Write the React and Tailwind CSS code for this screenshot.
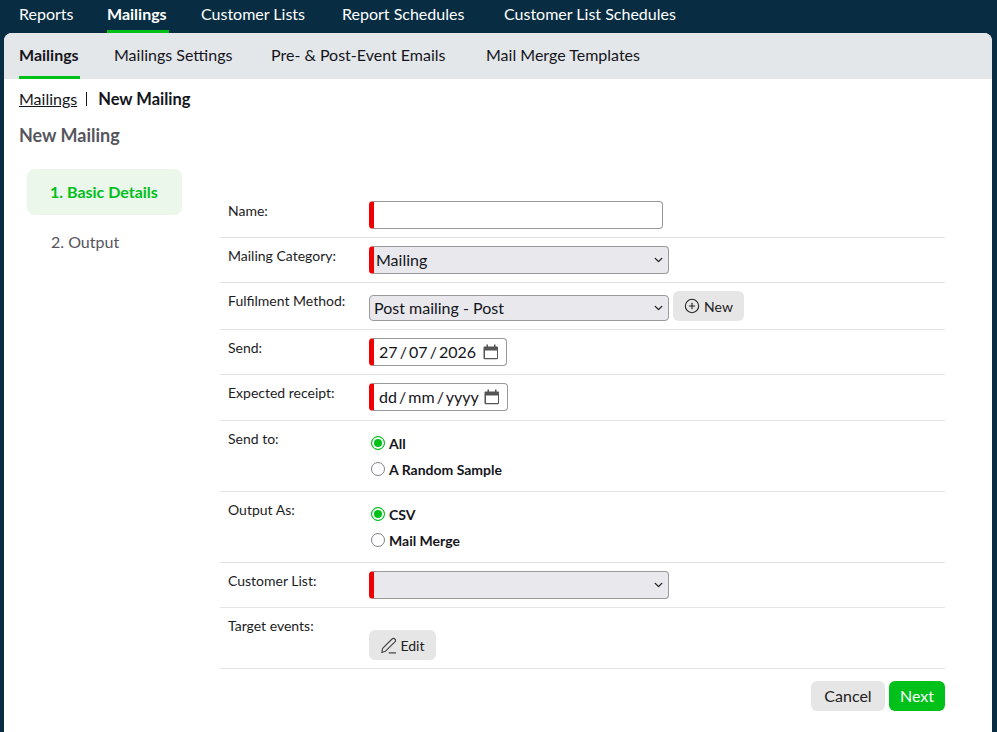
import { ChevronDown, CirclePlus } from "lucide-react";

const topLinks = ["Reports", "Mailings", "Customer Lists", "Report Schedules", "Customer List Schedules"];
const topWidths = ["w-[55px] mr-[33px]", "w-[62px] mr-[32px]", "w-[104px] mr-[37px]", "w-[124px] mr-[38px]", "w-[173px]"];
const subLinks = ["Mailings", "Mailings Settings", "Pre- & Post-Event Emails", "Mail Merge Templates"];
const subWidths = ["w-[61px] mr-[34px]", "w-[117px] mr-[40px]", "w-[175px] mr-[40px]", "w-[153px]"];

function CalendarIcon() {
  return (
    <svg width="16" height="16" viewBox="0 0 16 16" className="ml-auto mr-[7px] shrink-0">
      <path d="M3.5 0.5h1.5v2h6v-2h1.5v2h1.5a1 1 0 0 1 1 1v10.5a1.2 1.2 0 0 1-1.2 1.2H1.7a1.2 1.2 0 0 1-1.2-1.2V3.5a1 1 0 0 1 1-1h2zM2 6.5V14h12V6.5z" fill="#555" />
    </svg>
  );
}

function EditIcon() {
  return (
    <svg width="17" height="17" viewBox="0 0 24 24" fill="none" stroke="#444" strokeWidth="1.6" strokeLinejoin="round" strokeLinecap="round">
      <path d="M2.5 22l1.2-6L17 2.8a2.8 2.8 0 0 1 4 4L7.8 20z" />
      <path d="M13 22.5h9" />
    </svg>
  );
}

function Row({ label, children, className = "" }) {
  return (
    <div className={`flex border-b border-[#e3e3e3] ${className}`}>
      <label className="w-[149px] pl-2 pt-[8px] text-[14px] leading-[20px] text-[#1c1c24]">{label}</label>
      <div>{children}</div>
    </div>
  );
}

function DateBox({ value, width }) {
  return (
    <div className={`flex h-[28px] items-center rounded-[4px] border border-[#999] border-l-[5px] border-l-[#f00000] pl-[5px] text-[16px] text-[#15151c] ${width}`}>
      <span className="whitespace-nowrap [word-spacing:-2px]">{value}</span>
      <CalendarIcon />
    </div>
  );
}

function Select({ value, required, className = "" }) {
  return (
    <div className={`relative w-[300px] ${className}`}>
      <select
        className={`h-full w-full appearance-none rounded-[4px] border border-[#999] bg-[#e8e8ed] text-[16px] text-[#15151c] ${
          required ? "border-l-[5px] border-l-[#f00000] pl-[2px]" : "pl-[4px]"
        }`}
      >
        <option>{value}</option>
      </select>
      <ChevronDown size={13} strokeWidth={2.5} className="pointer-events-none absolute right-[4px] top-1/2 -translate-y-1/2 text-[#222]" />
    </div>
  );
}

function Radio({ label, checked }) {
  return (
    <label className="flex h-[26px] items-center text-[14px] font-bold text-[#15151c]">
      <input
        type="radio"
        defaultChecked={checked}
        name={label}
        className="ml-[2px] mr-[4px] h-[14px] w-[14px] appearance-none rounded-full border border-[#808088] bg-white checked:border-[#00c01a] checked:bg-[#00c01a] checked:shadow-[inset_0_0_0_2px_white]"
      />
      {label}
    </label>
  );
}

export default function App() {
  return (
    <div className="h-[732px] overflow-hidden bg-[#082d42] pr-[5px] pl-[4px] font-['Lato','Inter',sans-serif]">
      {/* Top nav */}
      <nav className="flex h-[33px] pl-[15px] text-[16px] text-white">
        {topLinks.map((link, i) => (
          <a
            key={link}
            className={`block h-[33px] whitespace-nowrap pt-[3px] leading-[22px] ${topWidths[i]} ${
              link === "Mailings" ? "border-b-[3px] border-[#00c01a] font-bold" : ""
            }`}
          >
            {link}
          </a>
        ))}
      </nav>

      <div className="h-[699px] overflow-hidden rounded-t-[8px] bg-white">
        {/* Sub nav */}
        <div className="flex h-[46px] bg-[#e4e7ea] pl-[15px] text-[16px] text-[#15151c]">
          {subLinks.map((link, i) => (
            <a
              key={link}
              className={`block h-[46px] whitespace-nowrap pt-[11px] leading-[22px] ${subWidths[i]} ${
                link === "Mailings" ? "border-b-[3px] border-[#00c01a] font-bold" : ""
              }`}
            >
              {link}
            </a>
          ))}
        </div>

        {/* Breadcrumb */}
        <div className="flex items-center pl-[15px] pt-[9px] text-[16px] leading-[22px] text-[#15151c]">
          <a className="underline">Mailings</a>
          <span className="ml-[9px] mr-[11px] h-[14px] w-px bg-[#15151c]"></span>
          <b className="text-[16.5px]">New Mailing</b>
        </div>
        <h1 className="pl-[15px] pt-[12px] text-[18px] font-bold leading-[26px] text-[#55555e]">New Mailing</h1>

        <div className="flex pt-[21px]">
          {/* Steps */}
          <div className="ml-[23px] w-[155px] shrink-0">
            <div className="h-[46px] rounded-[8px] bg-[#ecf7ec] pl-[23px] text-[16px] font-bold leading-[46px] text-[#00c01a]">1. Basic Details</div>
            <div className="mt-[4px] h-[46px] pl-[24px] text-[16px] leading-[46px] text-[#55555e]">2. Output</div>
          </div>

          {/* Form */}
          <div className="ml-[38px] w-[725px] pt-[24px]">
            <Row label="Name:" className="h-[45px]">
              <input className="mt-[8px] h-[28px] w-[294px] rounded-[4px] border border-[#999] border-l-[5px] border-l-[#f00000] bg-white" />
            </Row>
            <Row label="Mailing Category:" className="h-[45px]">
              <Select value="Mailing" required className="mt-[8px] h-[28px]" />
            </Row>
            <Row label="Fulfilment Method:" className="h-[47px]">
              <div className="flex items-start">
                <Select value="Post mailing - Post" className="mt-[12px] h-[26px]" />
                <button className="ml-[4px] mt-[8px] flex h-[30px] w-[71px] items-center justify-center gap-[4px] rounded-[6px] bg-[#e6e6e6] text-[14px] text-[#222]">
                  <CirclePlus size={16} strokeWidth={1.6} />
                  New
                </button>
              </div>
            </Row>
            <Row label="Send:" className="h-[45px]">
              <div className="pt-[8px]">
                <DateBox value="27 / 07 / 2026" width="w-[138px]" />
              </div>
            </Row>
            <Row label="Expected receipt:" className="h-[46px]">
              <div className="pt-[8px]">
                <DateBox value="dd / mm / yyyy" width="w-[139px]" />
              </div>
            </Row>
            <Row label="Send to:" className="h-[71px]">
              <div className="pt-[9px]">
                <Radio label="All" checked />
                <Radio label="A Random Sample" />
              </div>
            </Row>
            <Row label="Output As:" className="h-[71px]">
              <div className="pt-[9px]">
                <Radio label="CSV" checked />
                <Radio label="Mail Merge" />
              </div>
            </Row>
            <Row label="Customer List:" className="h-[45px]">
              <Select value="" required className="mt-[8px] h-[28px]" />
            </Row>
            <Row label="Target events:" className="h-[61px]">
              <button className="mt-[22px] flex h-[30px] w-[67px] items-center justify-center gap-[3px] rounded-[6px] bg-[#e6e6e6] text-[14px] text-[#222]">
                <EditIcon />
                Edit
              </button>
            </Row>
            <div className="flex justify-end gap-[4px] pt-[12px]">
              <button className="h-[30px] w-[74px] rounded-[6px] bg-[#e6e6e6] text-[16px] text-[#222]">Cancel</button>
              <button className="h-[30px] w-[56px] rounded-[6px] bg-[#00c01a] text-[16px] text-white">Next</button>
            </div>
          </div>
        </div>
      </div>
    </div>
  );
}
